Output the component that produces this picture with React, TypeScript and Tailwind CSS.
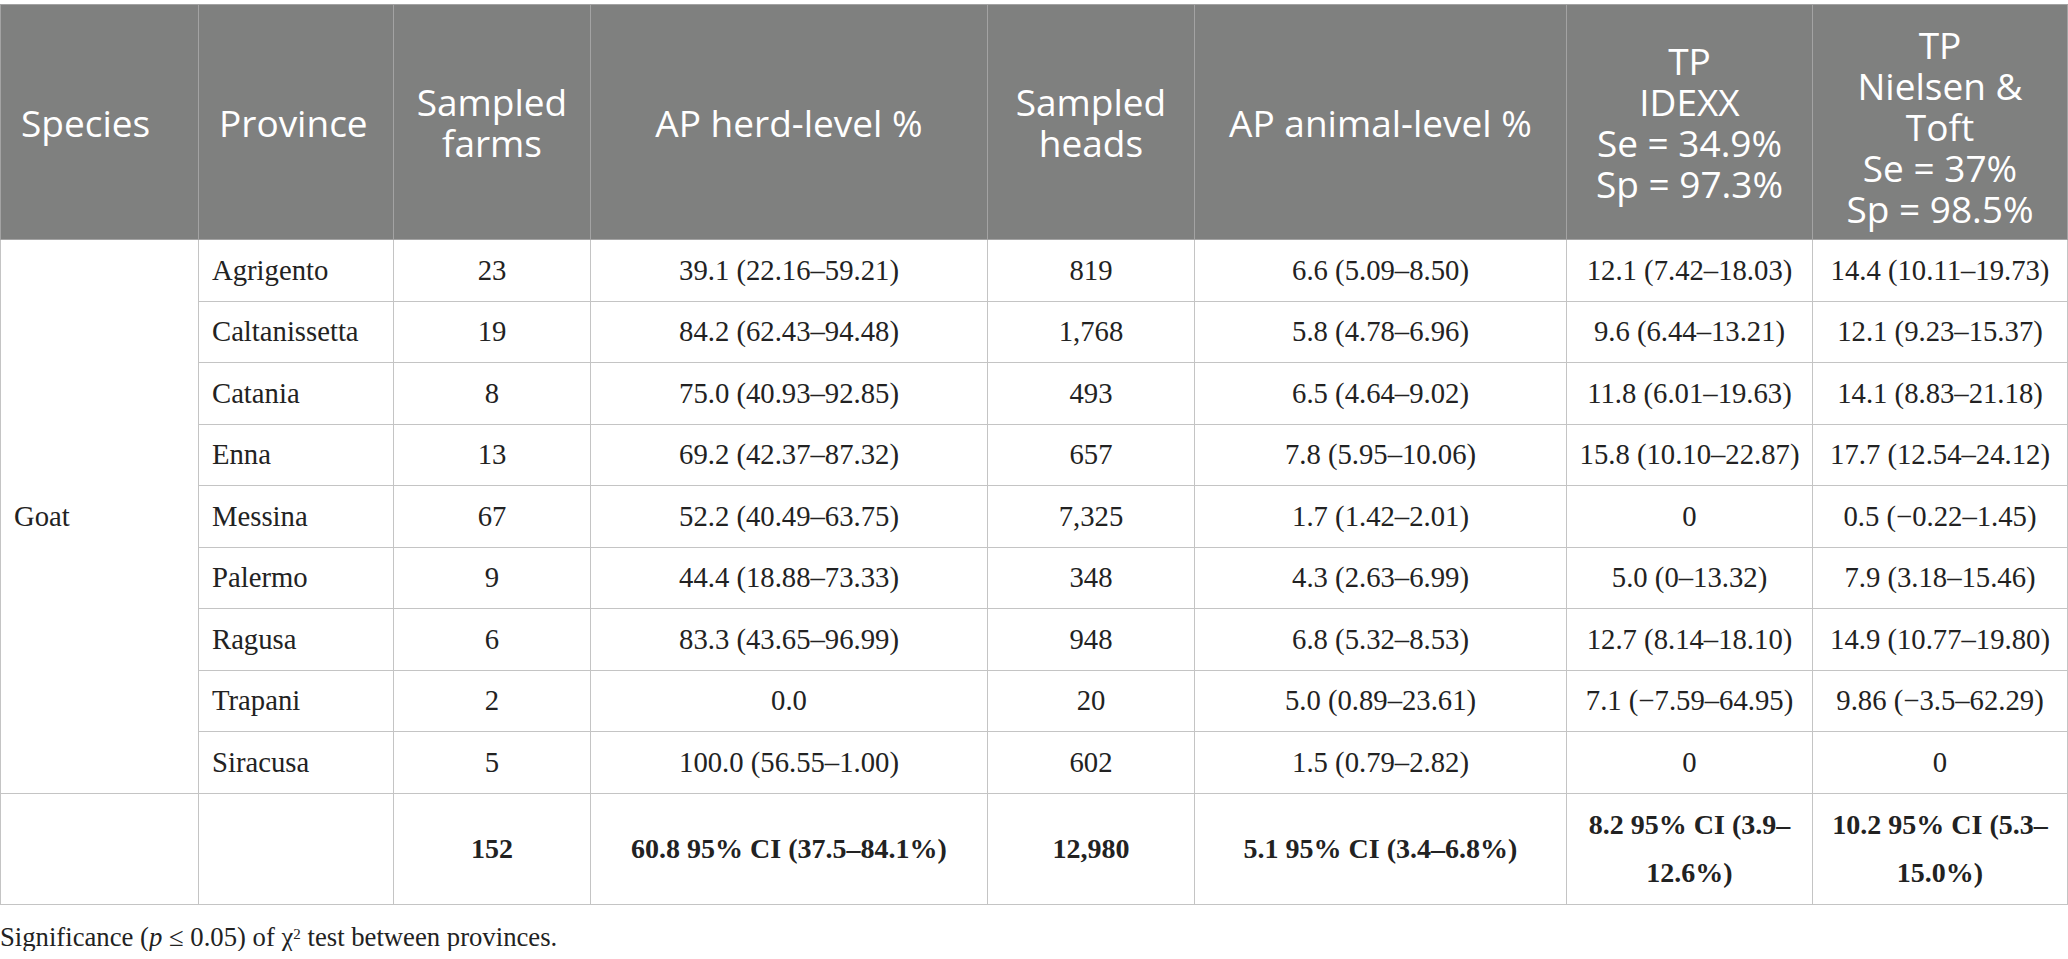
type Row = {
  province: string;
  farms: string;
  herd: string;
  heads: string;
  animal: string;
  idexx: string;
  nielsen: string;
};

const rows: Row[] = [
  { province: "Agrigento", farms: "23", herd: "39.1 (22.16–59.21)", heads: "819", animal: "6.6 (5.09–8.50)", idexx: "12.1 (7.42–18.03)", nielsen: "14.4 (10.11–19.73)" },
  { province: "Caltanissetta", farms: "19", herd: "84.2 (62.43–94.48)", heads: "1,768", animal: "5.8 (4.78–6.96)", idexx: "9.6 (6.44–13.21)", nielsen: "12.1 (9.23–15.37)" },
  { province: "Catania", farms: "8", herd: "75.0 (40.93–92.85)", heads: "493", animal: "6.5 (4.64–9.02)", idexx: "11.8 (6.01–19.63)", nielsen: "14.1 (8.83–21.18)" },
  { province: "Enna", farms: "13", herd: "69.2 (42.37–87.32)", heads: "657", animal: "7.8 (5.95–10.06)", idexx: "15.8 (10.10–22.87)", nielsen: "17.7 (12.54–24.12)" },
  { province: "Messina", farms: "67", herd: "52.2 (40.49–63.75)", heads: "7,325", animal: "1.7 (1.42–2.01)", idexx: "0", nielsen: "0.5 (−0.22–1.45)" },
  { province: "Palermo", farms: "9", herd: "44.4 (18.88–73.33)", heads: "348", animal: "4.3 (2.63–6.99)", idexx: "5.0 (0–13.32)", nielsen: "7.9 (3.18–15.46)" },
  { province: "Ragusa", farms: "6", herd: "83.3 (43.65–96.99)", heads: "948", animal: "6.8 (5.32–8.53)", idexx: "12.7 (8.14–18.10)", nielsen: "14.9 (10.77–19.80)" },
  { province: "Trapani", farms: "2", herd: "0.0", heads: "20", animal: "5.0 (0.89–23.61)", idexx: "7.1 (−7.59–64.95)", nielsen: "9.86 (−3.5–62.29)" },
  { province: "Siracusa", farms: "5", herd: "100.0 (56.55–1.00)", heads: "602", animal: "1.5 (0.79–2.82)", idexx: "0", nielsen: "0" },
];

const th = "border border-[#a3a3a3] align-middle font-normal text-white";
const td = "border border-[#c4c4c4] align-middle text-center";

export default function App() {
  return (
    <div className="w-[2068px] bg-white pt-[4px] font-['Liberation_Serif',serif] text-[#222]">
      {/* Table */}
      <table className="w-full table-fixed border-collapse border border-[#c4c4c4] text-[28.7px]">
        <colgroup>
          <col className="w-[198px]" />
          <col className="w-[195px]" />
          <col className="w-[197px]" />
          <col className="w-[397px]" />
          <col className="w-[207px]" />
          <col className="w-[372px]" />
          <col className="w-[246px]" />
          <col />
        </colgroup>
        <thead>
          <tr className="h-[235px] bg-[#7f807f] font-['Open_Sans',sans-serif] text-[37px] leading-[41px]">
            <th className={`${th} pl-[20px] text-left`}>Species</th>
            <th className={`${th} pl-[20px] text-left`}>Province</th>
            <th className={`${th} text-center`}>Sampled<br />farms</th>
            <th className={`${th} text-center`}>AP herd-level %</th>
            <th className={`${th} text-center`}>Sampled<br />heads</th>
            <th className={`${th} text-center`}>AP animal-level %</th>
            <th className={`${th} text-center`}>TP<br />IDEXX<br />Se = 34.9%<br />Sp = 97.3%</th>
            <th className={`${th} pt-[8px] text-center`}>TP<br />Nielsen &amp;<br />Toft<br />Se = 37%<br />Sp = 98.5%</th>
          </tr>
        </thead>
        <tbody>
          {rows.map((r, i) => (
            <tr key={r.province} className="h-[61.5px]">
              {i === 0 && (
                <td rowSpan={9} className="border border-[#c4c4c4] pl-[13px] align-middle">
                  Goat
                </td>
              )}
              <td className="border border-[#c4c4c4] pl-[13px] align-middle">{r.province}</td>
              <td className={td}>{r.farms}</td>
              <td className={td}>{r.herd}</td>
              <td className={td}>{r.heads}</td>
              <td className={td}>{r.animal}</td>
              <td className={td}>{r.idexx}</td>
              <td className={td}>{r.nielsen}</td>
            </tr>
          ))}
          <tr className="h-[111.5px] text-[28px] font-bold leading-[48px]">
            <td className={td}></td>
            <td className={td}></td>
            <td className={td}>152</td>
            <td className={td}>60.8 95% CI (37.5–84.1%)</td>
            <td className={td}>12,980</td>
            <td className={td}>5.1 95% CI (3.4–6.8%)</td>
            <td className={td}>8.2 95% CI (3.9–<br />12.6%)</td>
            <td className={td}>10.2 95% CI (5.3–<br />15.0%)</td>
          </tr>
        </tbody>
      </table>

      {/* Footnote */}
      <p className="mt-[19px] text-[26.7px] leading-[27px]">
        Significance (<i>p</i> ≤ 0.05) of χ<sup className="text-[15px]">2</sup> test between provinces.
      </p>
    </div>
  );
}
